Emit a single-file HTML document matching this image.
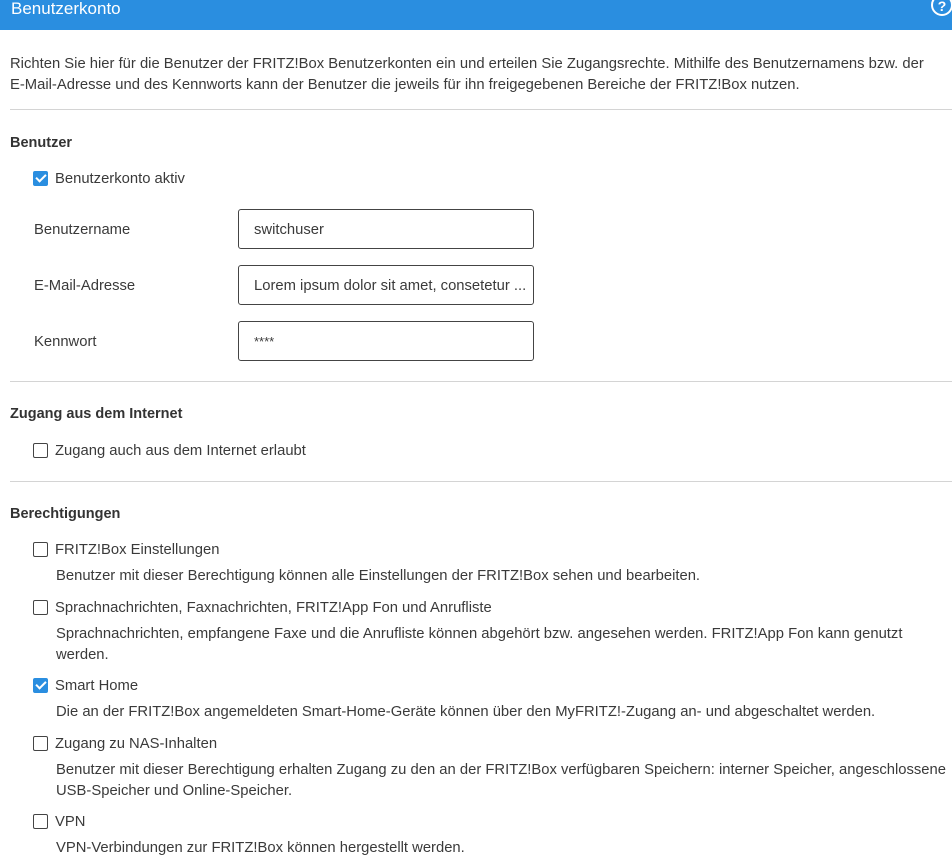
<!DOCTYPE html>
<html><head><meta charset="utf-8"><style>
*{margin:0;padding:0;box-sizing:border-box}
body{width:952px;height:868px;overflow:hidden;background:#fff;font-family:"Liberation Sans",sans-serif;font-size:14.8px;color:#3a3a3a;position:relative}
.a{position:absolute;white-space:nowrap;line-height:20px;margin-top:1px}
.hd{position:absolute;left:0;top:0;width:952px;height:30px;background:#2a8ee0}
.hr{position:absolute;left:10px;width:942px;height:1px;background:#d4d4d4}
.b{font-weight:bold;color:#333;font-size:14.5px}
.cb{position:absolute;left:33px;width:15px;height:15px;border:1.5px solid #444;border-radius:2px;background:#fff}
.cb.on{background:#2a8ee0;border-color:#2a8ee0}
.cb.on::after{content:"";position:absolute;left:4px;top:0px;width:4px;height:8px;border:solid #fff;border-width:0 2px 2px 0;transform:rotate(45deg)}
.in{position:absolute;left:238px;width:296px;height:40px;border:1px solid #444;border-radius:3px;padding-left:15px;line-height:40px;white-space:nowrap;overflow:hidden;color:#3a3a3a}
</style></head><body>
<div class="hd"></div>
<div class="a" style="left:11px;top:-2px;color:#fff;font-size:17px">Benutzerkonto</div>
<div style="position:absolute;left:931px;top:-6px;width:22px;height:22px;border:2px solid #fff;border-radius:50%;color:#fff;font-weight:bold;font-size:14px;text-align:center;line-height:20px">?</div>

<div class="a" style="left:10px;top:53px">Richten Sie hier für die Benutzer der FRITZ!Box Benutzerkonten ein und erteilen Sie Zugangsrechte. Mithilfe des Benutzernamens bzw. der</div>
<div class="a" style="left:10px;top:74px">E-Mail-Adresse und des Kennworts kann der Benutzer die jeweils für ihn freigegebenen Bereiche der FRITZ!Box nutzen.</div>
<div class="hr" style="top:109px"></div>

<div class="a b" style="left:10px;top:132px">Benutzer</div>
<div class="cb on" style="top:171px"></div>
<div class="a" style="left:55px;top:168px">Benutzerkonto aktiv</div>
<div class="a" style="left:34px;top:219px">Benutzername</div>
<div class="in" style="top:209px">switchuser</div>
<div class="a" style="left:34px;top:275px">E-Mail-Adresse</div>
<div class="in" style="top:265px">Lorem ipsum dolor sit amet, consetetur ...</div>
<div class="a" style="left:34px;top:331px">Kennwort</div>
<div class="in" style="top:321px;font-size:13px">****</div>
<div class="hr" style="top:381px"></div>

<div class="a b" style="left:10px;top:403px">Zugang aus dem Internet</div>
<div class="cb" style="top:443px"></div>
<div class="a" style="left:55px;top:440px">Zugang auch aus dem Internet erlaubt</div>
<div class="hr" style="top:481px"></div>

<div class="a b" style="left:10px;top:503px">Berechtigungen</div>
<div class="cb" style="top:542px"></div>
<div class="a" style="left:55px;top:539px">FRITZ!Box Einstellungen</div>
<div class="a" style="left:56px;top:565px">Benutzer mit dieser Berechtigung können alle Einstellungen der FRITZ!Box sehen und bearbeiten.</div>
<div class="cb" style="top:600px"></div>
<div class="a" style="left:55px;top:597px">Sprachnachrichten, Faxnachrichten, FRITZ!App Fon und Anrufliste</div>
<div class="a" style="left:56px;top:623px">Sprachnachrichten, empfangene Faxe und die Anrufliste können abgehört bzw. angesehen werden. FRITZ!App Fon kann genutzt</div>
<div class="a" style="left:56px;top:644px">werden.</div>
<div class="cb on" style="top:678px"></div>
<div class="a" style="left:55px;top:675px">Smart Home</div>
<div class="a" style="left:56px;top:701px">Die an der FRITZ!Box angemeldeten Smart-Home-Geräte können über den MyFRITZ!-Zugang an- und abgeschaltet werden.</div>
<div class="cb" style="top:736px"></div>
<div class="a" style="left:55px;top:733px">Zugang zu NAS-Inhalten</div>
<div class="a" style="left:56px;top:759px">Benutzer mit dieser Berechtigung erhalten Zugang zu den an der FRITZ!Box verfügbaren Speichern: interner Speicher, angeschlossene</div>
<div class="a" style="left:56px;top:780px">USB-Speicher und Online-Speicher.</div>
<div class="cb" style="top:814px"></div>
<div class="a" style="left:55px;top:811px">VPN</div>
<div class="a" style="left:56px;top:837px">VPN-Verbindungen zur FRITZ!Box können hergestellt werden.</div>
</body></html>
